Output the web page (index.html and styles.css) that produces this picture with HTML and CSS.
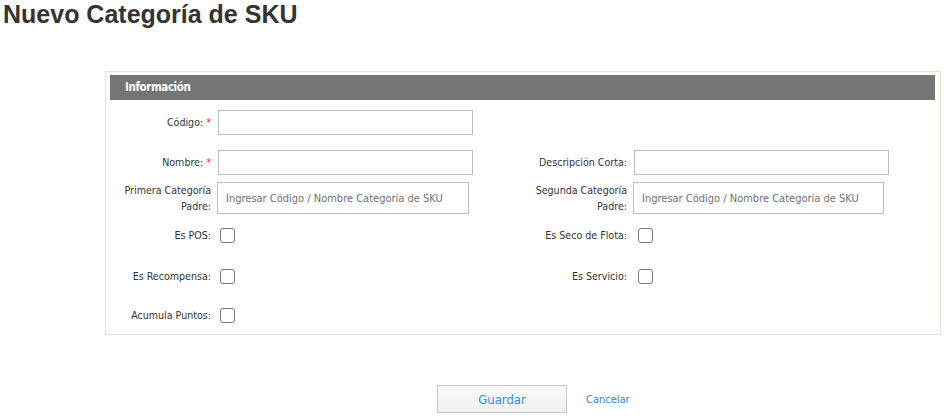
FILE: index.html
```html
<!DOCTYPE html>
<html lang="es">
<head>
<meta charset="utf-8">
<title>Nuevo Categoría de SKU</title>
<link rel="stylesheet" href="styles.css">
</head>
<body>
<h1 class="title">Nuevo Categoría de SKU</h1>
<section class="panel">
  <div class="panel-head">Información</div>
  <div class="form-grid">
    <label class="lbl">Código: <span class="req">*</span></label>
    <div class="field"><input class="txt" type="text"></div>
    <div class="empty"></div>
    <div class="empty"></div>

    <label class="lbl">Nombre: <span class="req">*</span></label>
    <div class="field"><input class="txt" type="text"></div>
    <label class="lbl">Descripción Corta:</label>
    <div class="field"><input class="txt" type="text"></div>

    <label class="lbl">Primera Categoría Padre:</label>
    <div class="field"><input class="txt tall" type="text" placeholder="Ingresar Código / Nombre Categoría de SKU"></div>
    <label class="lbl">Segunda Categoría Padre:</label>
    <div class="field"><input class="txt tall tall-r" type="text" placeholder="Ingresar Código / Nombre Categoría de SKU"></div>

    <label class="lbl">Es POS:</label>
    <div class="field"><span class="chk"></span></div>
    <label class="lbl">Es Seco de Flota:</label>
    <div class="field"><span class="chk chk-r"></span></div>

    <label class="lbl">Es Recompensa:</label>
    <div class="field"><span class="chk"></span></div>
    <label class="lbl">Es Servicio:</label>
    <div class="field"><span class="chk chk-r"></span></div>

    <label class="lbl">Acumula Puntos:</label>
    <div class="field"><span class="chk"></span></div>
    <div class="empty"></div>
    <div class="empty"></div>
  </div>
</section>
<div class="actions">
  <button class="btn" type="button">Guardar</button>
  <a class="link" href="#">Cancelar</a>
</div>
</body>
</html>
```
FILE: styles.css
```css
html, body {
  margin: 0;
  padding: 0;
  background: #ffffff;
}
body {
  font-family: "DejaVu Sans Condensed", "Liberation Sans", Arial, sans-serif;
  font-size: 11px;
  color: #333333;
}
.title {
  margin: 0;
  padding-left: 3px;
  font-family: "Liberation Sans", Arial, sans-serif;
  font-size: 25px;
  font-weight: bold;
  line-height: 28px;
  color: #333333;
}
.panel {
  margin: 43px 7px 0 105px;
  border: 1px solid #e3e3da;
  padding: 3px 5px 0 4px;
}
.panel-head {
  height: 25px;
  line-height: 25px;
  background: #757575;
  color: #ffffff;
  font-weight: bold;
  font-size: 11.5px;
  letter-spacing: -0.4px;
  padding-left: 15px;
}
.form-grid {
  display: grid;
  grid-template-columns: 101px 255px 147px 256px;
  grid-template-rows: 40px 40px 32px 42px 40px 38px;
  justify-content: start;
  column-gap: 7px;
  margin-top: 2px;
  align-items: center;
}
.lbl {
  justify-self: end;
  text-align: right;
  max-width: 100px;
  line-height: 16px;
  font-size: 10.6px;
  color: #333333;
}
.req {
  color: #e0262d;
}
.field {
  display: flex;
  align-items: center;
}
.txt {
  box-sizing: border-box;
  width: 255px;
  height: 25px;
  margin: 0;
  border: 1px solid #bcbcbc;
  padding: 0 8px;
  font-family: inherit;
  font-size: 11px;
  color: #333333;
  background: #ffffff;
}
.txt.tall {
  height: 32px;
  width: 252px;
  margin-left: -1px;
}
.txt.tall-r {
  width: 251px;
}
.txt::placeholder {
  color: #6f6f6f;
}
.chk {
  box-sizing: border-box;
  width: 15px;
  height: 15px;
  border: 1px solid #777777;
  border-radius: 3px;
  margin-left: 2px;
  background: #ffffff;
}
.chk.chk-r {
  margin-left: 4px;
}
.actions {
  display: flex;
  align-items: center;
  gap: 19px;
  margin-top: 50px;
  padding-left: 437px;
}
.btn {
  box-sizing: border-box;
  width: 130px;
  height: 28px;
  border: 1px solid #c8c8c8;
  background: linear-gradient(#fafafa, #f0f0f0);
  color: #3a8cc9;
  font-family: inherit;
  font-size: 13px;
  font-weight: normal;
  padding: 0;
}
.link {
  color: #3a87c8;
  text-decoration: none;
  font-size: 11px;
}
```
